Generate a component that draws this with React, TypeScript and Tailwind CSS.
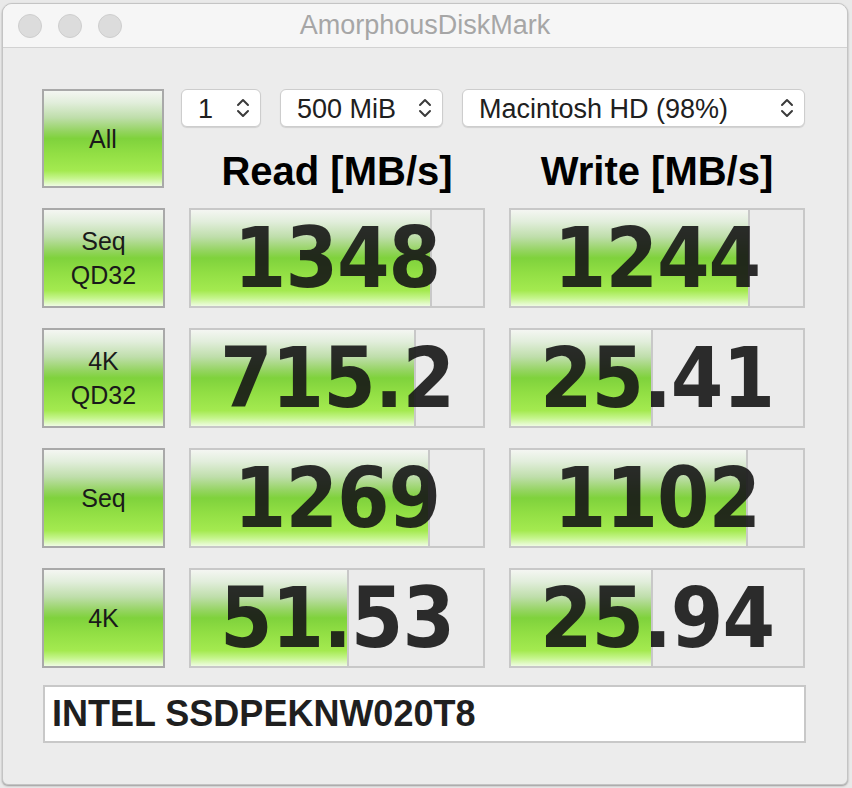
import { ReactNode } from 'react';

interface Result {
  label: string[];
  read: string;
  readPct: number;
  write: string;
  writePct: number;
}

const results: Result[] = [
  { label: ['Seq', 'QD32'], read: '1348', readPct: 82.7, write: '1244', writePct: 82 },
  { label: ['4K', 'QD32'], read: '715.2', readPct: 77.2, write: '25.41', writePct: 48.6 },
  { label: ['Seq'], read: '1269', readPct: 82, write: '1102', writePct: 81 },
  { label: ['4K'], read: '51.53', readPct: 54.1, write: '25.94', writePct: 48.6 },
];

const green =
  'bg-[linear-gradient(to_bottom,#f4f6f2_0%,#e2eedc_12%,#bfdeab_28%,#95d462_42%,#7fd23c_50%,#92df44_66%,#a4ea50_84%,#c6f58e_92%,#effce2_100%)]';

function Chevrons() {
  return (
    <svg width="14" height="22" viewBox="0 0 14 22" fill="none" stroke="#3a3a3a" strokeWidth="2" strokeLinecap="round" strokeLinejoin="round">
      <path d="M2 8 L7 3 L12 8" />
      <path d="M2 14 L7 19 L12 14" />
    </svg>
  );
}

function Select({ width, children }: { width: string; children: ReactNode }) {
  return (
    <div className={`${width} h-[38px] bg-white border border-[#cdcdcd] rounded-[6px] shadow-[0_1px_1px_rgba(0,0,0,0.12)] flex items-center justify-between pl-[16px] pr-[10px] text-[27px] text-[#202020]`}>
      <span className="pt-[2px]">{children}</span>
      <Chevrons />
    </div>
  );
}

function TestButton({ lines }: { lines: string[] }) {
  return (
    <div className={`h-full border-2 border-[#a9a9a9] ${green} flex flex-col items-center justify-center text-[25px] leading-[34px] text-[#1a1a1a]`}>
      {lines.map((l) => (
        <span key={l}>{l}</span>
      ))}
    </div>
  );
}

function Meter({ value, pct }: { value: string; pct: number }) {
  return (
    <div className="relative h-[100px] border-2 border-[#c8c8c8] bg-[#ebebeb] overflow-hidden">
      <div className={`absolute left-0 top-0 bottom-0 border-r-2 border-[#c8c8c8] ${green}`} style={{ width: `${pct}%` }} />
      <div
        className="relative h-full flex items-center justify-center text-[84px] font-bold text-[#161616]/90 tracking-[-1px]"
        style={{ fontFamily: '"DejaVu Sans Condensed", "DejaVu Sans", sans-serif', fontStretch: 'condensed' }}
      >
        {value}
      </div>
    </div>
  );
}

export default function App() {
  return (
    <div className="w-[852px] h-[788px] bg-[#e9e9e9] pt-[3px] pl-[2px] font-['Liberation_Sans',Arial,sans-serif]">
      <div className="w-[846px] h-[782px] rounded-t-[10px] rounded-b-[6px] border border-[#c4c4c4] bg-[#ececec] overflow-hidden flex flex-col shadow-[0_1px_2px_rgba(0,0,0,0.35)]">
        <div className="h-[44px] shrink-0 bg-[#f6f6f6] border-b border-[#d2d2d2] flex items-center relative">
          <div className="flex gap-[16px] pl-[15px]">
            <span className="w-[24px] h-[24px] rounded-full bg-[#dcdcdc] border border-[#cecece]" />
            <span className="w-[24px] h-[24px] rounded-full bg-[#dcdcdc] border border-[#cecece]" />
            <span className="w-[24px] h-[24px] rounded-full bg-[#dcdcdc] border border-[#cecece]" />
          </div>
          <div className="absolute inset-0 flex items-center justify-center text-[27px] text-[#a6a6a6] pointer-events-none">
            AmorphousDiskMark
          </div>
        </div>

        <div className="pt-[41px] pl-[39px] pr-[40px]">
          <div className="grid grid-cols-[123px_296px_296px] gap-x-[24px] gap-y-[20px]">
            <div className="h-[99px] mr-[1px]">
              <TestButton lines={['All']} />
            </div>
            <div className="col-span-2 h-[99px] flex flex-col">
              <div className="flex gap-[19px] -ml-[8px]">
                <Select width="w-[80px]">1</Select>
                <Select width="w-[163px]">500 MiB</Select>
                <Select width="w-[343px]">Macintosh HD (98%)</Select>
              </div>
              <div className="grid grid-cols-2 gap-x-[24px] mt-[24px] text-[40px] font-bold text-black leading-none">
                <div className="text-center">Read [MB/s]</div>
                <div className="text-center">Write [MB/s]</div>
              </div>
            </div>

            {results.map((r) => (
              <div key={r.label.join('-') + r.read} className="contents">
                <div className="h-[100px]">
                  <TestButton lines={r.label} />
                </div>
                <Meter value={r.read} pct={r.readPct} />
                <Meter value={r.write} pct={r.writePct} />
              </div>
            ))}
          </div>

          <div className="mt-[17px] ml-[1px] w-[763px] h-[58px] bg-white border-2 border-[#c8c8c8] flex items-center pl-[7px] text-[36px] font-bold text-[#1f1f1f]">
            INTEL SSDPEKNW020T8
          </div>
        </div>
      </div>
    </div>
  );
}
